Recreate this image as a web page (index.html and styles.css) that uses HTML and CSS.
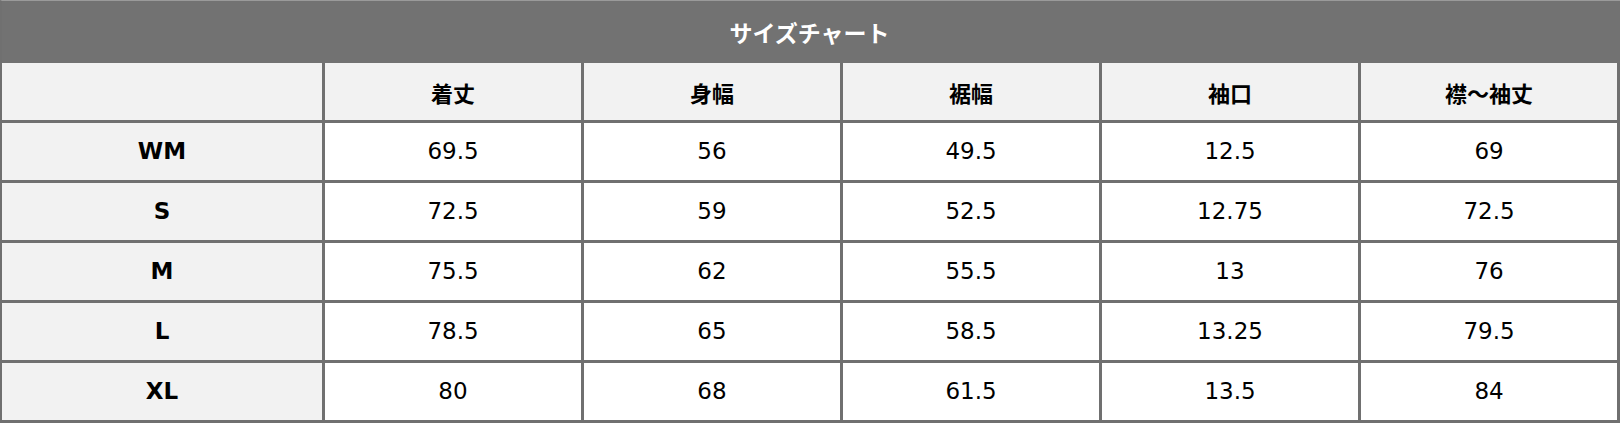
FILE: index.html
```html
<!DOCTYPE html>
<html lang="ja">
<head>
<meta charset="utf-8">
<title>サイズチャート</title>
<link rel="stylesheet" href="styles.css">
</head>
<body>
<table class="chart">
  <colgroup>
    <col class="c-size">
    <col class="c-val"><col class="c-val"><col class="c-val"><col class="c-val"><col class="c-val">
  </colgroup>
  <thead>
    <tr class="title-row"><th colspan="6" class="title">サイズチャート</th></tr>
    <tr class="head-row">
      <th class="corner"></th>
      <th>着丈</th><th>身幅</th><th>裾幅</th><th>袖口</th><th class="last">襟～袖丈</th>
    </tr>
  </thead>
  <tbody>
    <tr><th class="size">WM</th><td>69.5</td><td>56</td><td>49.5</td><td>12.5</td><td class="last">69</td></tr>
    <tr><th class="size">S</th><td>72.5</td><td>59</td><td>52.5</td><td>12.75</td><td class="last">72.5</td></tr>
    <tr><th class="size">M</th><td>75.5</td><td>62</td><td>55.5</td><td>13</td><td class="last">76</td></tr>
    <tr><th class="size">L</th><td>78.5</td><td>65</td><td>58.5</td><td>13.25</td><td class="last">79.5</td></tr>
    <tr><th class="size">XL</th><td>80</td><td>68</td><td>61.5</td><td>13.5</td><td class="last">84</td></tr>
  </tbody>
</table>
</body>
</html>
```
FILE: styles.css
```css
html, body {
  margin: 0;
  padding: 0;
  background: #ffffff;
}
.chart {
  width: 1620px;
  border-collapse: separate;
  border-spacing: 0;
  table-layout: fixed;
  border-top: 1px solid #9a9a9a;
  border-left: 2px solid #707070;
  font-family: "DejaVu Sans", "Noto Sans CJK JP", sans-serif;
  font-size: 22px;
  color: #000;
}
.c-size { width: 323px; }
.c-val { width: 259px; }
.chart th, .chart td {
  padding: 0;
  text-align: center;
  vertical-align: middle;
  border-right: 3px solid #707070;
  border-bottom: 3px solid #707070;
  height: 57px;
  line-height: 24px;
}
.chart td {
  background: #ffffff;
  font-weight: 400;
  font-size: 23px;
  padding-bottom: 2px;
  height: 55px;
}
.chart th { background: #f2f2f2; font-weight: 700; }
.chart .size { font-size: 23px; padding-bottom: 2px; height: 55px; }
.head-row th {
  font-family: "Noto Sans CJK JP", sans-serif;
  font-size: 22px;
}
.chart .title {
  background: #727272;
  color: #ffffff;
  height: 62px;
  border-bottom: 0;
  border-right: 3px solid #727272;
  font-family: "Noto Sans CJK JP", sans-serif;
  font-size: 23px;
}
```
